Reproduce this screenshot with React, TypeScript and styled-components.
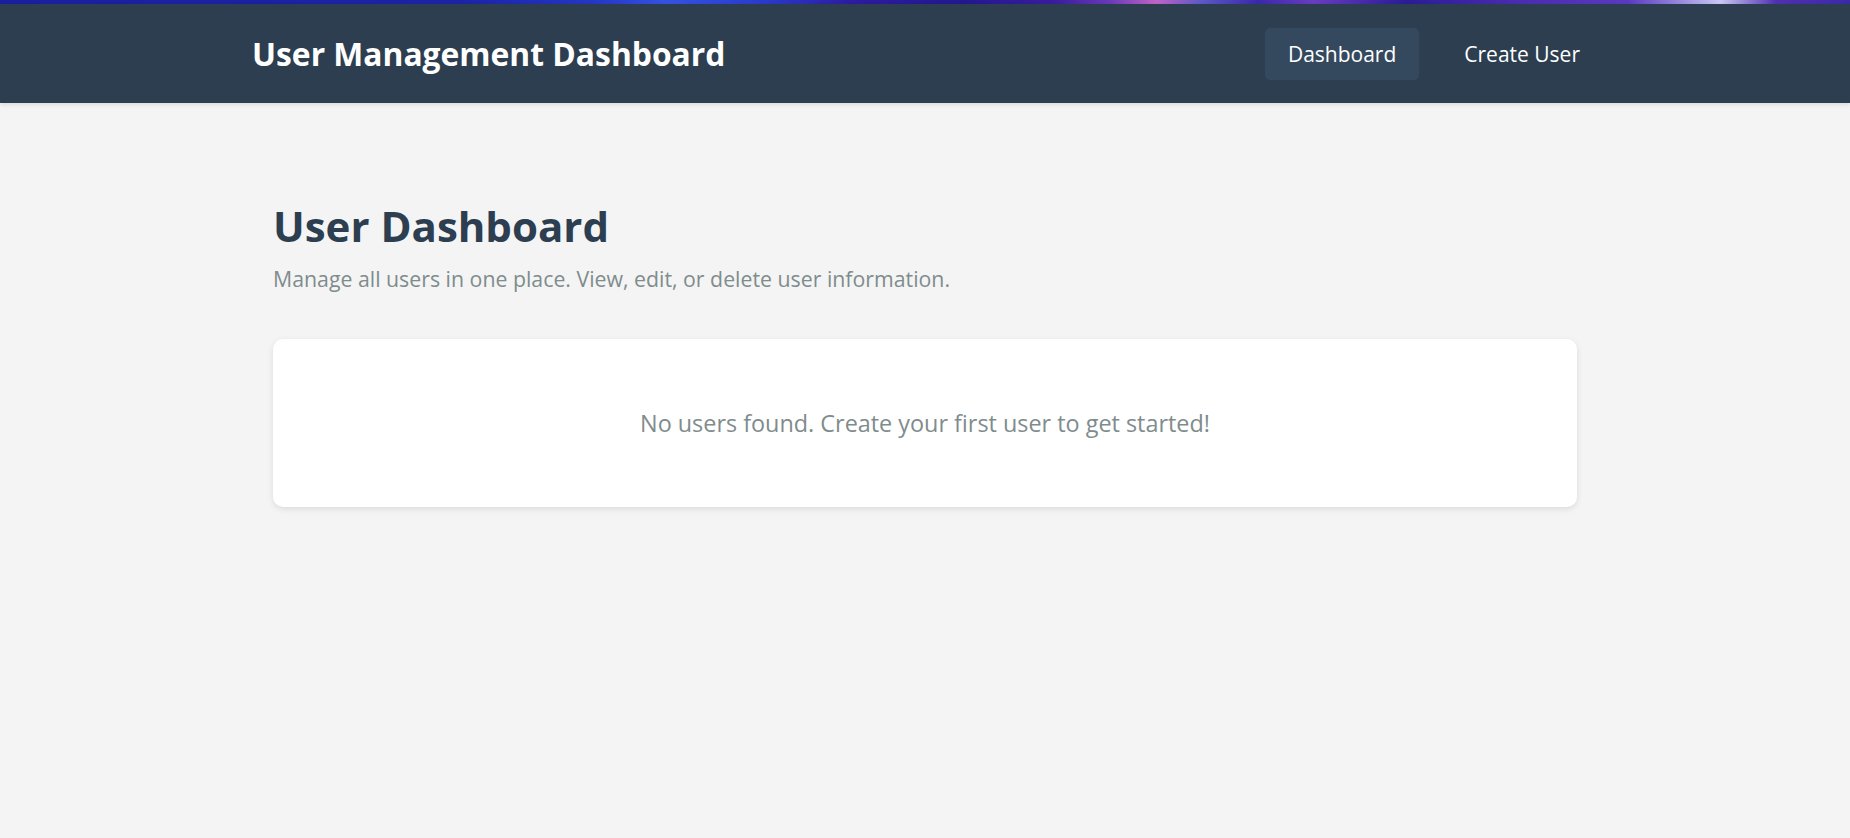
import React from "react";
import styled, { createGlobalStyle } from "styled-components";

const GlobalStyle = createGlobalStyle`
  * { box-sizing: border-box; }
  html, body { margin: 0; padding: 0; }
  body {
    font-family: "Open Sans", "Noto Sans", sans-serif;
    background: #f4f4f4;
    color: #2c3e50;
  }
`;

const TopStripe = styled.div`
  height: 4px;
  background: linear-gradient(
    90deg,
    #1a1f9e 0%,
    #1c24a6 25%,
    #2436c4 32%,
    #3452e2 36%,
    #2a3ccc 41%,
    #2c1ca0 46%,
    #22188e 52%,
    #3a1c9e 57%,
    #6a3ab8 60%,
    #c064c8 62.5%,
    #5a58c4 65%,
    #3a28ac 68%,
    #6a3cc0 71%,
    #2a1c96 76%,
    #4a2cb0 82%,
    #5a3ac0 88%,
    #c8c8f4 93%,
    #5030b0 96%,
    #3a2aa8 100%
  );
`;

const Header = styled.header`
  background: #2c3e50;
  box-shadow: 0 2px 4px rgba(0, 0, 0, 0.1);
`;

const HeaderInner = styled.div`
  max-width: 1400px;
  margin: 0 auto;
  padding: 0 22px 0 27px;
  height: 99px;
  display: flex;
  align-items: center;
  justify-content: space-between;
`;

const Brand = styled.h1`
  margin: 0;
  color: #ffffff;
  font-size: 31.8px;
  font-weight: 700;
`;

const Nav = styled.nav`
  display: flex;
  align-items: center;
  gap: 22px;
`;

const NavLink = styled.a<{ $active?: boolean }>`
  display: inline-flex;
  align-items: center;
  height: 52px;
  padding: 0 23px;
  border-radius: 5px;
  color: #ffffff;
  font-size: 21px;
  text-decoration: none;
  background: ${(p) => (p.$active ? "#34495e" : "transparent")};
  cursor: pointer;
`;

const Main = styled.main`
  max-width: 1400px;
  margin: 0 auto;
  padding: 98px 48px 48px;
`;

const PageTitle = styled.h2`
  margin: 0;
  font-size: 42px;
  font-weight: 700;
  color: #2c3e50;
  line-height: 1.2;
`;

const Subtitle = styled.p`
  margin: 13px 0 0;
  font-size: 21.3px;
  color: #7f8c8d;
`;

const Card = styled.section`
  margin-top: 46px;
  background: #ffffff;
  border-radius: 10px;
  box-shadow: 0 2px 6px rgba(0, 0, 0, 0.1);
  height: 168px;
  display: flex;
  align-items: center;
  justify-content: center;
`;

const EmptyText = styled.p`
  margin: 0;
  font-size: 23.4px;
  color: #7f8c8d;
`;

export default function App() {
  return (
    <>
      <GlobalStyle />
      <TopStripe />
      <Header>
        <HeaderInner>
          <Brand>User Management Dashboard</Brand>
          <Nav>
            <NavLink $active>Dashboard</NavLink>
            <NavLink>Create User</NavLink>
          </Nav>
        </HeaderInner>
      </Header>
      <Main>
        <PageTitle>User Dashboard</PageTitle>
        <Subtitle>Manage all users in one place. View, edit, or delete user information.</Subtitle>
        <Card>
          <EmptyText>No users found. Create your first user to get started!</EmptyText>
        </Card>
      </Main>
    </>
  );
}
